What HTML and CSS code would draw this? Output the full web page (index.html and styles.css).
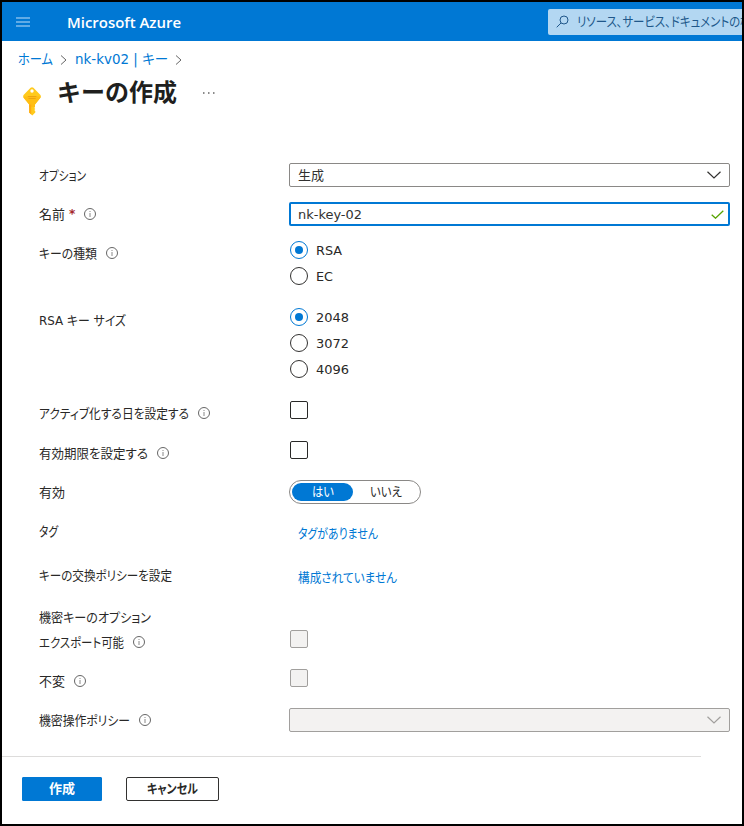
FILE: index.html
```html
<!DOCTYPE html>
<html lang="ja">
<head>
<meta charset="utf-8">
<title>キーの作成 - Microsoft Azure</title>
<link rel="stylesheet" href="styles.css">
</head>
<body>
<svg class="defs" width="0" height="0">
  <symbol id="info" viewBox="0 0 12 12"><circle cx="6" cy="6" r="5.5" fill="none" stroke="#666" /><path d="M6 5v4M6 3v1" stroke="#888" /></symbol>
  <symbol id="sep" viewBox="0 0 7 12"><path d="M1 1.5l5 4.5-5 4.5" fill="none" stroke="#666" /></symbol>
  <symbol id="down" viewBox="0 0 14 8"><path d="M.5.7L7 7 13.500.7" fill="none" stroke="currentColor" stroke-width="1.2" /></symbol>
</svg>
<div class="page">
  <header class="topbar">
    <svg class="burger" width="14" height="10"><path d="M0 1h14M0 5h14M0 9h14" stroke="#80bcec" stroke-width="1.5" /></svg>
    <span class="brand fit" data-w="114">Microsoft Azure</span>
    <div class="search">
      <svg width="13" height="13" viewBox="0 0 13 13"><circle cx="8" cy="5" r="4" fill="none" stroke="#20578a" /><path d="M5 8L.7 12.300" stroke="#20578a" /></svg>
      <span class="fit" data-w="186">リソース、サービス、ドキュメントの検索</span>
    </div>
  </header>
  <nav class="crumbs">
    <span class="fit" data-w="35">ホーム</span>
    <svg width="7" height="12"><use href="#sep" /></svg>
    <span class="fit" data-w="93">nk-kv02 | キー</span>
    <svg width="7" height="12"><use href="#sep" /></svg>
  </nav>
  <div class="heading">
    <svg class="key" width="18" height="29" viewBox="0 0 18 29">
      <path d="M7.600.8Q9-.2 10.400.8L17.200 7.800Q18.400 9.300 17.400 10.800L12 17.500V20L11.300 21L12.300 22L11.300 23L12.300 24.200V25.500L9.300 28.500L6.200 25.500V17.500L.6 10.800Q-.4 9.300.8 7.800Z" fill="#ffca1c" />
      <path d="M1 9.500H17.500L17.400 10.800L12 17.500V20H6.200V17.500L.6 10.800Z" fill="#ffbe14" />
      <path d="M6.200 17.500h2V27.500L6.200 25.500Z" fill="#ffa912" />
      <circle cx="9" cy="4" r="1.700" fill="#fff" />
      <path d="M4.800 9.500h8.600M5.500 11.500h7.200" stroke="#eda310" />
    </svg>
    <h1>キーの作成</h1>
    <svg class="more" width="12" height="2"><path d="M0 1h1.500M5 1h1.500M10 1h1.500" stroke="#666" stroke-width="1.500" /></svg>
  </div>
  <form class="form">
    <div class="row"><div class="label"><span class="fit" data-w="47">オプション</span></div>
      <div class="select"><span class="fit" data-w="26">生成</span><svg width="14" height="8"><use href="#down" /></svg></div></div>
    <div class="row"><div class="label"><span class="fit" data-w="26">名前</span><b class="req">*</b><svg class="info" width="12" height="12"><use href="#info" /></svg></div>
      <div class="select input"><span class="fit" data-w="64">nk-key-02</span><svg width="13" height="9"><path d="M.7 4.700L4.500 8.200 12.300.7" fill="none" stroke="#57a300" stroke-width="1.300" /></svg></div></div>
    <div class="row type"><div class="label"><span class="fit" data-w="58">キーの種類</span><svg class="info" width="12" height="12"><use href="#info" /></svg></div>
      <div class="radios"><div class="opt"><i class="radio on"></i><span class="fit" data-w="26">RSA</span></div><div class="opt"><i class="radio"></i><span class="fit" data-w="17">EC</span></div></div></div>
    <div class="row size"><div class="label"><span class="fit" data-w="87">RSA キー サイズ</span></div>
      <div class="radios"><div class="opt"><i class="radio on"></i><span class="fit" data-w="33">2048</span></div><div class="opt"><i class="radio"></i><span class="fit" data-w="33">3072</span></div><div class="opt"><i class="radio"></i><span class="fit" data-w="33">4096</span></div></div></div>
    <div class="row act"><div class="label"><span class="fit" data-w="150">アクティブ化する日を設定する</span><svg class="info" width="12" height="12"><use href="#info" /></svg></div><i class="box"></i></div>
    <div class="row"><div class="label"><span class="fit" data-w="109">有効期限を設定する</span><svg class="info" width="12" height="12"><use href="#info" /></svg></div><i class="box"></i></div>
    <div class="row"><div class="label"><span class="fit" data-w="26">有効</span></div>
      <div class="toggle"><div class="yes"><span class="fit" data-w="22">はい</span></div><div class="no"><span class="fit" data-w="32">いいえ</span></div></div></div>
    <div class="row tag"><div class="label"><span class="fit" data-w="19">タグ</span></div><a class="link"><span class="fit" data-w="80">タグがありません</span></a></div>
    <div class="row policy"><div class="label"><span class="fit" data-w="133">キーの交換ポリシーを設定</span></div><a class="link"><span class="fit" data-w="99">構成されていません</span></a></div>
    <div class="row sub"><div class="label"><span class="fit" data-w="112">機密キーのオプション</span></div></div>
    <div class="row"><div class="label"><span class="fit" data-w="85">エクスポート可能</span><svg class="info" width="12" height="12"><use href="#info" /></svg></div><i class="box off"></i></div>
    <div class="row"><div class="label"><span class="fit" data-w="26">不変</span><svg class="info" width="12" height="12"><use href="#info" /></svg></div><i class="box off"></i></div>
    <div class="row last"><div class="label"><span class="fit" data-w="91">機密操作ポリシー</span><svg class="info" width="12" height="12"><use href="#info" /></svg></div>
      <div class="select disabled"><svg width="14" height="8"><use href="#down" /></svg></div></div>
  </form>
  <footer class="actions">
    <div class="btn primary"><span class="fit" data-w="26">作成</span></div>
    <div class="btn"><span class="fit" data-w="51">キャンセル</span></div>
  </footer>
</div>
<script src="fit.js"></script>
</body>
</html>
```
FILE: styles.css
```css
* { box-sizing: border-box; }
body {
  margin: 0;
  font: 13px/24px "DejaVu Sans", "Noto Sans CJK JP", sans-serif;
  color: #292827;
}
svg { display: block; flex: none; }
.defs { position: absolute; }
.page { width: 744px; height: 826px; border: 2px solid #000; background: #fff; overflow: hidden; }
.fit { display: inline-block; flex: none; white-space: nowrap; transform-origin: 0 50%; font-feature-settings: "palt"; }

.topbar { display: flex; align-items: center; height: 39px; padding-left: 14px; background: #0078d4; }
.brand { margin-left: 37px; color: #fff; font: 600 15px/24px "Open Sans", "Noto Sans", sans-serif; }
.search {
  display: flex; align-items: center; gap: 8px; width: 194px; height: 26px;
  margin-left: auto; padding-left: 8px; overflow: hidden;
  border-radius: 2px 0 0 2px; background: #b3d7f2; color: #20578a;
}

.crumbs { display: flex; align-items: center; gap: 8px; height: 24px; margin-top: 6px; padding-left: 16px; font-size: 14px; color: #0078d4; }
.crumbs svg { margin: 2px 0 0 -1px; }
.heading { display: flex; height: 48px; padding-left: 21px; }
.key { margin-top: 16px; }
h1 { margin: 2px 0 0 16px; font: bold 24px/36px "Noto Sans CJK JP", sans-serif; color: #201f1e; }
.more { margin: 21px 0 0 26px; }

.form { margin: 44px 0 0 37px; }
.row { display: grid; grid-template-columns: 250px 441px; align-items: start; height: 39px; }
.label { display: flex; align-items: center; height: 24px; }
.label .fit, .select .fit, .opt .fit { padding-top: 2px; }
.info { margin-left: 9px; }
.req { width: 6px; margin-left: 4px; font-size: 12px; color: #a4262c; }
.type { height: 67px; }
.size { height: 93px; }
.act { height: 40px; }
.policy { height: 42px; }
.tag { height: 44px; }
.sub { height: 25px; }
.last { height: 48px; }

.select {
  display: flex; align-items: center; height: 24px; padding: 0 8px;
  border: 1px solid #8a8886; border-radius: 2px; color: #323130;
}
.select svg { margin-left: auto; }
.input { border: 2px solid #0078d4; padding: 0 4px 0 7px; }
.disabled { border-color: #a19f9d; background: #f3f2f1; color: #a19f9d; }

.radios { margin-top: -4px; }
.opt { display: flex; align-items: center; gap: 8px; height: 26px; padding-left: 1px; }
.radio { display: grid; place-items: center; width: 18px; height: 18px; border: 1px solid #323130; border-radius: 50%; }
.on { border-color: #0078d4; }
.on::after { content: ""; width: 8px; height: 8px; border-radius: 50%; background: #0078d4; }
.box { width: 18px; height: 18px; margin-left: 1px; border: 1px solid #292827; border-radius: 2px; }
.off { border-color: #a19f9d; background: #f3f2f1; }

.toggle { display: flex; width: 132px; height: 24px; padding: 2px; border: 1px solid #8a8886; border-radius: 12px; }
.yes, .no { display: flex; align-items: center; justify-content: center; width: 62px; height: 18px; border-radius: 9px; }
.yes { background: #0078d4; color: #fff; }
.no { width: 66px; }
.link { margin: 3px 0 0 9px; color: #0078d4; }

.actions { display: flex; gap: 24px; width: 699px; padding: 20px 0 0 20px; border-top: 1px solid #dddcdb; }
.btn { display: flex; align-items: center; justify-content: center; width: 93px; height: 24px; border: 1px solid #323130; border-radius: 2px; font-weight: bold; line-height: 22px; }
.primary { width: 80px; border-color: #0078d4; border-radius: 1px; background: #0078d4; color: #fff; }
```
FILE: fit.js
```js
for (const el of document.querySelectorAll('.fit')) {
  const natural = el.getBoundingClientRect().width;
  const width = Number(el.dataset.w);
  el.style.transform = `scaleX(${width / natural})`;
  // Keep the text's own box and pull the next item in by the difference.
  el.style.width = natural + 'px';
  el.style.marginRight = (width - natural) + 'px';
}
```
